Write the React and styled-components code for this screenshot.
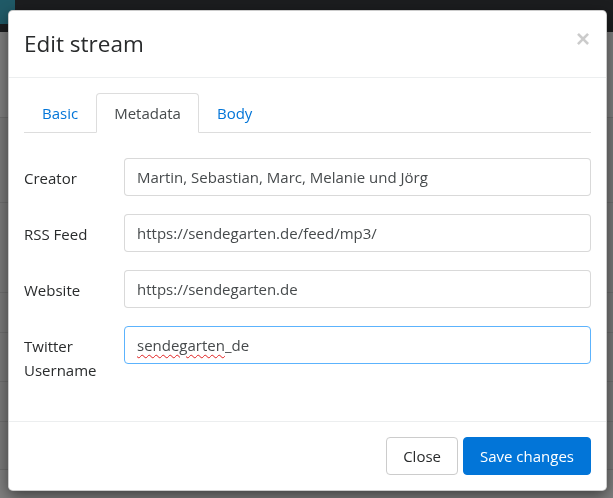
import React from "react";
import styled, { createGlobalStyle } from "styled-components";

const GlobalStyle = createGlobalStyle`
  html, body {
    margin: 0;
    padding: 0;
  }
  body {
    font-family: "Open Sans", "Noto Sans", "Liberation Sans", sans-serif;
    font-size: 15px;
    line-height: 24px;
    color: #292b2c;
    background: #ffffff;
    overflow: hidden;
  }
  * {
    box-sizing: border-box;
  }
`;

// page behind the modal
const Page = styled.div`
  width: 100%;
  height: 498px;
  background: #ffffff;
`;

const Navbar = styled.div`
  height: 32px;
  background: #383a3e;
  display: flex;
`;

const Brand = styled.div`
  width: 15px;
  height: 24px;
  background: #3fb3cd;
`;

const TableRow = styled.div`
  height: ${(p) => p.h}px;
  border-bottom: 1px solid #dddddd;
  background: ${(p) => (p.shade ? "#f4f4f4" : "#ffffff")};
`;

const Backdrop = styled.div`
  position: fixed;
  inset: 0;
  background: rgba(0, 0, 0, 0.5);
`;

const ModalWrap = styled.div`
  position: fixed;
  inset: 0;
  padding: 10px 0 0 8px;
`;

const ModalContent = styled.div`
  width: 599px;
  background: #ffffff;
  border: 1px solid rgba(0, 0, 0, 0.2);
  border-radius: 0.3rem;
  box-shadow: 0 5px 15px rgba(0, 0, 0, 0.5);
  display: flex;
  flex-direction: column;
`;

const ModalHeader = styled.div`
  display: flex;
  align-items: flex-start;
  justify-content: space-between;
  padding: 15px;
  border-bottom: 1px solid #eceeef;
`;

const ModalTitle = styled.h4`
  margin: 0;
  font-size: 22.5px;
  font-weight: 400;
  line-height: 36px;
  color: #292b2c;
`;

const CloseX = styled.button`
  border: 0;
  background: transparent;
  padding: 0;
  margin: 1px 1px 0 0;
  font-family: "Liberation Sans", sans-serif;
  font-size: 24px;
  font-weight: 700;
  line-height: 1;
  color: #000000;
  opacity: 0.2;
  cursor: pointer;
`;

const ModalBody = styled.div`
  padding: 15px;
`;

const Tabs = styled.ul`
  display: flex;
  list-style: none;
  margin: 0;
  padding: 0;
  border-bottom: 1px solid #dddddd;
`;

const TabItem = styled.li`
  margin-bottom: -1px;
`;

const TabLink = styled.a`
  display: block;
  padding: 7px 17px;
  line-height: 24px;
  border: 1px solid ${(p) => (p.active ? "#dddddd" : "transparent")};
  border-bottom-color: ${(p) => (p.active ? "#ffffff" : "transparent")};
  border-radius: 0.25rem 0.25rem 0 0;
  background: ${(p) => (p.active ? "#ffffff" : "transparent")};
  color: ${(p) => (p.active ? "#464a4c" : "#0275d8")};
  text-decoration: none;
  cursor: pointer;
`;

const Form = styled.form`
  margin: 25px 0 0;
  display: flex;
  flex-direction: column;
  gap: 16px;
  padding-bottom: 16px;
`;

const FormRow = styled.div`
  display: grid;
  grid-template-columns: 70px 1fr;
  column-gap: 30px;
  align-items: start;
`;

const Label = styled.label`
  padding: 8px 0;
  line-height: 24px;
  color: #292b2c;
`;

const FieldWrap = styled.div`
  position: relative;
`;

const Input = styled.input`
  display: block;
  width: 100%;
  height: 38px;
  padding: 8px 12px;
  font: inherit;
  line-height: 20px;
  color: #464a4c;
  background: #ffffff;
  border: 1px solid ${(p) => (p.focused ? "#5cb3fd" : "rgba(0, 0, 0, 0.15)")};
  border-radius: 0.25rem;
  outline: none;
`;

const SpellMark = styled.span`
  position: absolute;
  left: 13px;
  top: 9px;
  line-height: 20px;
  color: transparent;
  pointer-events: none;
  text-decoration: underline wavy #e02020;
  text-decoration-thickness: 1px;
  text-underline-offset: 3px;
`;

const ModalFooter = styled.div`
  display: flex;
  justify-content: flex-end;
  align-items: center;
  gap: 5px;
  padding: 15px;
  border-top: 1px solid #eceeef;
`;

const Button = styled.button`
  height: 38px;
  padding: 0 16px;
  font: inherit;
  line-height: 24px;
  border-radius: 0.25rem;
  border: 1px solid ${(p) => (p.primary ? "#0275d8" : "#cccccc")};
  background: ${(p) => (p.primary ? "#0275d8" : "#ffffff")};
  color: ${(p) => (p.primary ? "#ffffff" : "#292b2c")};
  cursor: pointer;
`;

const rows = [86, 85, 90, 40, 49, 40, 48];

const fields = [
  { label: "Creator", value: "Martin, Sebastian, Marc, Melanie und Jörg" },
  { label: "RSS Feed", value: "https://sendegarten.de/feed/mp3/" },
  { label: "Website", value: "https://sendegarten.de" },
  { label: "Twitter Username", value: "sendegarten_de", focused: true, typo: "sendegarten" },
];

export default function App() {
  return (
    <>
      <GlobalStyle />
      <Page>
        <Navbar>
          <Brand />
        </Navbar>
        {rows.map((h, i) => (
          <TableRow key={i} h={h} shade={i > 0} />
        ))}
      </Page>
      <Backdrop />
      <ModalWrap>
        <ModalContent>
          <ModalHeader>
            <ModalTitle>Edit stream</ModalTitle>
            <CloseX type="button" aria-label="Close">×</CloseX>
          </ModalHeader>
          <ModalBody>
            <Tabs>
              <TabItem><TabLink>Basic</TabLink></TabItem>
              <TabItem><TabLink active>Metadata</TabLink></TabItem>
              <TabItem><TabLink>Body</TabLink></TabItem>
            </Tabs>
            <Form onSubmit={(e) => e.preventDefault()}>
              {fields.map((f) => (
                <FormRow key={f.label}>
                  <Label>{f.label}</Label>
                  <FieldWrap>
                    <Input defaultValue={f.value} focused={f.focused} spellCheck={false} />
                    {f.typo && <SpellMark>{f.typo}</SpellMark>}
                  </FieldWrap>
                </FormRow>
              ))}
            </Form>
          </ModalBody>
          <ModalFooter>
            <Button type="button">Close</Button>
            <Button type="button" primary>Save changes</Button>
          </ModalFooter>
        </ModalContent>
      </ModalWrap>
    </>
  );
}
